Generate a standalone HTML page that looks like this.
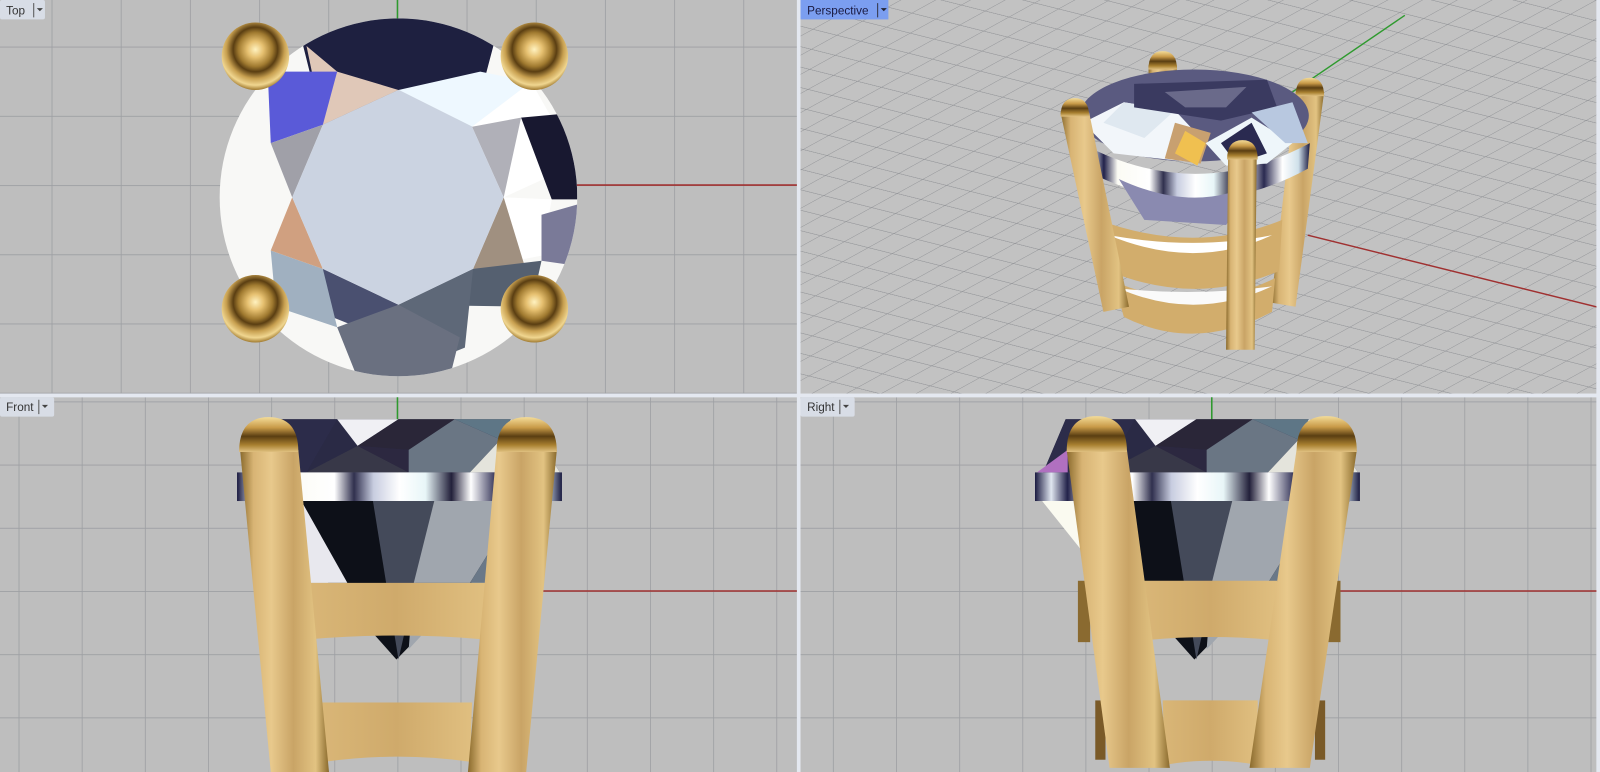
<!DOCTYPE html>
<html><head><meta charset="utf-8"><style>
html,body{margin:0;padding:0;background:#e4e8f0;overflow:hidden}
svg{display:block}
text{font-family:"Liberation Sans",sans-serif}
</style></head><body>
<svg width="1600" height="772" viewBox="0 0 1566 755" preserveAspectRatio="none" xmlns="http://www.w3.org/2000/svg">
<defs>
<pattern id="g1" width="67.7" height="67.7" patternUnits="userSpaceOnUse" x="389" y="181">
<rect width="67.7" height="67.7" fill="#bebebe"/><path d="M0 0V67.7M0 0H67.7" stroke="#9d9fa3" stroke-width="1.6"/></pattern>
<pattern id="g2" width="61.8" height="61.8" patternUnits="userSpaceOnUse" x="389" y="578">
<rect width="61.8" height="61.8" fill="#bebebe"/><path d="M0 0V61.8M0 0H61.8" stroke="#9d9fa3" stroke-width="1.6"/></pattern>
<pattern id="g3" width="61.8" height="61.8" patternUnits="userSpaceOnUse" x="1186" y="578">
<rect width="61.8" height="61.8" fill="#bebebe"/><path d="M0 0V61.8M0 0H61.8" stroke="#9d9fa3" stroke-width="1.6"/></pattern>
<pattern id="gp" width="100" height="100" patternUnits="userSpaceOnUse" patternTransform="matrix(0.234 0.0585 0.25 -0.1375 1280 230)">
<rect width="100" height="100" fill="#c2c2c2"/><path d="M0 0V100M0 0H100" stroke="#8e9094" stroke-width="5"/></pattern>
<linearGradient id="gold" x1="0" x2="1" y1="0" y2="0">
<stop offset="0" stop-color="#8a6a2c"/><stop offset=".15" stop-color="#d8b474"/><stop offset=".35" stop-color="#e8c98c"/><stop offset=".6" stop-color="#c9a466"/><stop offset=".85" stop-color="#e2c382"/><stop offset="1" stop-color="#8a6a2c"/></linearGradient>
<linearGradient id="band" x1="0" x2="1" y1="0" y2="0">
<stop offset="0" stop-color="#d9b677"/><stop offset=".5" stop-color="#cfaa6b"/><stop offset="1" stop-color="#e0bf80"/></linearGradient>
<radialGradient id="ball" cx=".5" cy=".4" r=".6">
<stop offset="0" stop-color="#fff2c0"/><stop offset=".2" stop-color="#e6c070"/><stop offset=".42" stop-color="#a07a30"/><stop offset=".55" stop-color="#5a3e12"/><stop offset=".72" stop-color="#c8a050"/><stop offset=".88" stop-color="#f0d690"/><stop offset="1" stop-color="#a07a30"/></radialGradient>
<linearGradient id="cap" x1="0" x2="0" y1="0" y2="1">
<stop offset="0" stop-color="#f4dc98"/><stop offset=".3" stop-color="#c89a48"/><stop offset=".55" stop-color="#5a3e12"/><stop offset=".8" stop-color="#a88030"/><stop offset="1" stop-color="#e0c080"/></linearGradient>
<linearGradient id="gird" x1="0" x2="1" y1="0" y2="0">
<stop offset="0" stop-color="#1a1a40"/><stop offset=".05" stop-color="#e0e6f0"/><stop offset=".1" stop-color="#22224a"/><stop offset=".16" stop-color="#fbfbf4"/><stop offset=".3" stop-color="#ffffff"/><stop offset=".36" stop-color="#30304e"/><stop offset=".42" stop-color="#c8cde0"/><stop offset=".5" stop-color="#ffffff"/><stop offset=".58" stop-color="#e8f6f8"/><stop offset=".66" stop-color="#22203a"/><stop offset=".72" stop-color="#ffffff"/><stop offset=".8" stop-color="#2a2a50"/><stop offset=".88" stop-color="#ffffff"/><stop offset=".95" stop-color="#cfe0ea"/><stop offset="1" stop-color="#1a1a40"/></linearGradient>
<clipPath id="cTL"><rect x="0" y="0" width="780" height="385"/></clipPath>
<clipPath id="cTR"><rect x="783.5" y="0" width="779" height="385"/></clipPath>
<clipPath id="cBL"><rect x="0" y="388.5" width="780" height="367"/></clipPath>
<clipPath id="cBR"><rect x="783.5" y="388.5" width="779" height="367"/></clipPath>
<g id="frontDiamond">
<polygon points="240,462 262,410 515,410 548,462" fill="#2a2a45"/>
<polygon points="262,410 330,410 300,462 240,462" fill="#2c2c4a"/>
<polygon points="330,410 390,410 350,436" fill="#f0f0f4"/>
<polygon points="350,436 390,410 445,410 400,440" fill="#2a2638"/>
<polygon points="300,462 350,436 400,462" fill="#383848"/>
<polygon points="350,436 400,440 400,462" fill="#2c2840"/>
<polygon points="400,440 445,410 490,430 460,462 400,462" fill="#6a7684"/>
<polygon points="445,410 500,410 490,430" fill="#5e7686"/>
<polygon points="490,430 500,410 515,410 548,462 460,462" fill="#e4e4dc"/>
<rect x="232" y="462" width="318" height="28" fill="url(#gird)"/>
<polygon points="250,490 540,490 388,645" fill="#0d1018"/>
<polygon points="250,490 295,490 340,570 300,570" fill="#e8e8ee"/>
<polygon points="365,490 425,490 390,645" fill="#444a5a"/>
<polygon points="425,490 510,490 460,570 405,570" fill="#a0a6ae"/>
<polygon points="405,570 460,570 400,635" fill="#a0a6ae"/>
<polygon points="510,490 540,490 480,570 460,570" fill="#6a7888"/>
</g>
</defs>

<rect width="1566" height="755" fill="#e4e8f0"/>
<!-- TOP -->
<g clip-path="url(#cTL)">
<rect x="0" y="0" width="780" height="385" fill="url(#g1)"/>
<line x1="389" y1="181" x2="780" y2="181" stroke="#a03030" stroke-width="1.5"/>
<line x1="389" y1="0" x2="389" y2="181" stroke="#2e9a2e" stroke-width="1.5"/>
<ellipse cx="390" cy="193" rx="175" ry="175" fill="#f8f8f6"/>
<clipPath id="circ"><ellipse cx="390" cy="193" rx="175" ry="175"/></clipPath>
<g clip-path="url(#circ)">
<polygon points="290,18 490,18 462,124 390,88 316,122" fill="#1e2040"/>
<polygon points="300,45 330,70 390,88 316,122" fill="#e0c8b8"/>
<polygon points="262,70 330,70 316,122 265,140" fill="#5a5ad8"/>
<polygon points="390,88 462,124 520,80 470,70" fill="#eef8ff"/>
<polygon points="462,124 520,80 565,160 493,193" fill="#ffffff"/>
<polygon points="510,115 565,110 565,195 540,195" fill="#181830"/>
<polygon points="462,124 510,115 493,193" fill="#b0b0b8"/>
<polygon points="493,193 540,195 530,250 463,263" fill="#ffffff"/>
<polygon points="530,210 565,200 565,260 530,255" fill="#7a7a98"/>
<polygon points="463,263 493,193 515,265" fill="#a09080"/>
<polygon points="463,263 530,255 520,300 390,298" fill="#556070"/>
<polygon points="390,298 463,263 455,340 405,360" fill="#5e6878"/>
<polygon points="316,263 390,298 350,320 300,300" fill="#4a5070"/>
<polygon points="330,320 390,298 450,330 440,370 350,370" fill="#6a7080"/>
<polygon points="265,245 316,263 330,320 270,300" fill="#a0b0c0"/>
<polygon points="286,193 316,263 265,245" fill="#d0a080"/>
<polygon points="265,140 316,122 286,193" fill="#a0a0a8"/>
<polygon points="316,122 390,88 462,124 493,193 463,263 390,298 316,263 286,193" fill="#cbd3e1"/>
</g>
<circle cx="250" cy="55" r="33" fill="url(#ball)"/>
<circle cx="523" cy="55" r="33" fill="url(#ball)"/>
<circle cx="250" cy="302" r="33" fill="url(#ball)"/>
<circle cx="523" cy="302" r="33" fill="url(#ball)"/>
<rect x="0" y="0" width="44" height="19" rx="2" fill="#d8dde6"/>
<text x="6" y="14" font-size="11.5" fill="#333">Top</text>
<line x1="33" y1="3" x2="33" y2="17" stroke="#555"/>
<polygon points="36,8 42,8 39,11" fill="#444"/>
</g>

<!-- PERSPECTIVE -->
<g clip-path="url(#cTR)">
<rect x="783.5" y="0" width="779" height="385" fill="url(#gp)"/>
<line x1="1280" y1="230" x2="1566" y2="301" stroke="#a03030" stroke-width="1.4"/>
<line x1="1262" y1="92" x2="1375" y2="15" stroke="#2e9a2e" stroke-width="1.4"/>
<polygon points="1124,64 1152,64 1150,150 1126,150" fill="url(#gold)"/>
<path d="M1124,68 Q1124,50 1138,50 Q1152,50 1152,68 Z" fill="url(#cap)"/>
<polygon points="1268,90 1296,90 1268,300 1244,296" fill="url(#gold)"/>
<path d="M1268,94 Q1268,76 1282,76 Q1296,76 1296,94 Z" fill="url(#cap)"/>
<path d="M1075,215 Q1170,250 1255,215 L1252,265 Q1170,300 1085,265Z" fill="#d2ad6c"/>
<path d="M1085,230 Q1170,265 1245,230 Q1170,245 1085,230Z" fill="#ffffff"/>
<path d="M1090,275 Q1170,310 1248,272 L1245,305 Q1170,345 1100,310Z" fill="#d2ad6c"/>
<path d="M1095,282 Q1170,315 1245,280 Q1170,290 1095,282Z" fill="#fafafa"/>
<path d="M1058,140 Q1170,200 1282,140 L1280,165 Q1170,225 1060,165Z" fill="url(#gird)"/>
<path d="M1095,175 Q1170,210 1230,178 L1200,220 L1120,215Z" fill="#8a8ab0"/>
<ellipse cx="1169" cy="113" rx="112" ry="45" fill="#5a5a80"/>
<polygon points="1060,120 1100,100 1150,108 1180,140 1160,158 1090,150" fill="#f2f6fa"/>
<polygon points="1100,100 1150,108 1120,135 1080,120" fill="#dfe8f0"/>
<polygon points="1110,82 1240,78 1250,105 1195,118 1110,105" fill="#3a3a60"/>
<polygon points="1140,90 1220,85 1200,105 1160,105" fill="#6a6a8a"/>
<polygon points="1150,120 1185,130 1175,160 1140,155" fill="#c8a070"/>
<polygon points="1160,128 1180,140 1172,162 1150,150" fill="#f0c050"/>
<polygon points="1180,140 1225,115 1265,140 1240,160 1200,162" fill="#eef6fa"/>
<polygon points="1225,110 1265,100 1280,140 1258,140" fill="#b8c8e0"/>
<polygon points="1195,140 1225,120 1240,150 1210,160" fill="#2a2a50"/>
<polygon points="1038,110 1066,110 1105,300 1080,305" fill="url(#gold)"/>
<path d="M1038,114 Q1038,96 1052,96 Q1066,96 1066,114 Z" fill="url(#cap)"/>
<polygon points="1202,152 1230,152 1228,342 1200,342" fill="url(#gold)"/>
<path d="M1201,156 Q1201,137 1216,137 Q1231,137 1231,156 Z" fill="url(#cap)"/>
<rect x="783.5" y="0" width="86" height="19" fill="#7b9ef0"/>
<text x="790" y="14" font-size="11.5" fill="#1a1a40">Perspective</text>
<line x1="859" y1="3" x2="859" y2="17" stroke="#334"/>
<polygon points="862,8 868,8 865,11" fill="#223"/>
</g>

<!-- FRONT -->
<g clip-path="url(#cBL)">
<rect x="0" y="388.5" width="780" height="367" fill="url(#g2)"/>
<line x1="389" y1="578" x2="780" y2="578" stroke="#a03030" stroke-width="1.5"/>
<line x1="389" y1="388" x2="389" y2="578" stroke="#2e9a2e" stroke-width="1.5"/>
<use href="#frontDiamond"/>
<path d="M300,570 L475,570 L470,625 Q390,618 305,625Z" fill="url(#band)"/>
<path d="M315,687 L462,687 L460,745 Q390,735 318,745Z" fill="url(#band)"/>
<polygon points="235,440 292,440 322,755 265,755" fill="url(#gold)"/>
<path d="M234,442 Q234,408 263,408 Q292,408 292,442 Z" fill="url(#cap)"/>
<polygon points="486,440 545,440 515,755 458,755" fill="url(#gold)"/>
<path d="M486,442 Q486,408 515,408 Q545,408 545,442 Z" fill="url(#cap)"/>
<rect x="0" y="388.5" width="53" height="19" rx="2" fill="#d8dde6"/>
<text x="6" y="402" font-size="11.5" fill="#333">Front</text>
<line x1="38" y1="391" x2="38" y2="405" stroke="#555"/>
<polygon points="41,396 47,396 44,399" fill="#444"/>
</g>

<!-- RIGHT -->
<g clip-path="url(#cBR)">
<rect x="783.5" y="388.5" width="779" height="367" fill="url(#g3)"/>
<line x1="1186" y1="578" x2="1566" y2="578" stroke="#a03030" stroke-width="1.5"/>
<line x1="1186" y1="388" x2="1186" y2="578" stroke="#2e9a2e" stroke-width="1.5"/>
<g transform="translate(781,0)"><use href="#frontDiamond"/></g>
<polygon points="1015,462 1045,440 1045,462" fill="#b070c0"/>
<polygon points="1020,490 1050,490 1060,540" fill="#fafaf0"/>
<rect x="1055" y="568" width="12" height="60" fill="#8a6a30"/>
<rect x="1300" y="568" width="12" height="60" fill="#8a6a30"/>
<rect x="1072" y="685" width="10" height="58" fill="#7a5a28"/>
<rect x="1287" y="685" width="10" height="58" fill="#7a5a28"/>
<path d="M1120,568 L1250,568 L1248,626 Q1185,620 1122,626Z" fill="url(#band)"/>
<path d="M1138,685 L1231,685 L1231,748 Q1185,740 1140,748Z" fill="url(#band)"/>
<polygon points="1044,440 1103,440 1145,751 1086,751" fill="url(#gold)"/>
<path d="M1044,442 Q1044,407 1073,407 Q1103,407 1103,442 Z" fill="url(#cap)"/>
<polygon points="1269,440 1328,440 1282,751 1223,751" fill="url(#gold)"/>
<path d="M1269,442 Q1269,407 1298,407 Q1328,407 1328,442 Z" fill="url(#cap)"/>
<rect x="783.5" y="388.5" width="53" height="19" rx="2" fill="#d8dde6"/>
<text x="790" y="402" font-size="11.5" fill="#333">Right</text>
<line x1="822" y1="391" x2="822" y2="405" stroke="#555"/>
<polygon points="825,396 831,396 828,399" fill="#444"/>
</g>
</svg>
</body></html>
